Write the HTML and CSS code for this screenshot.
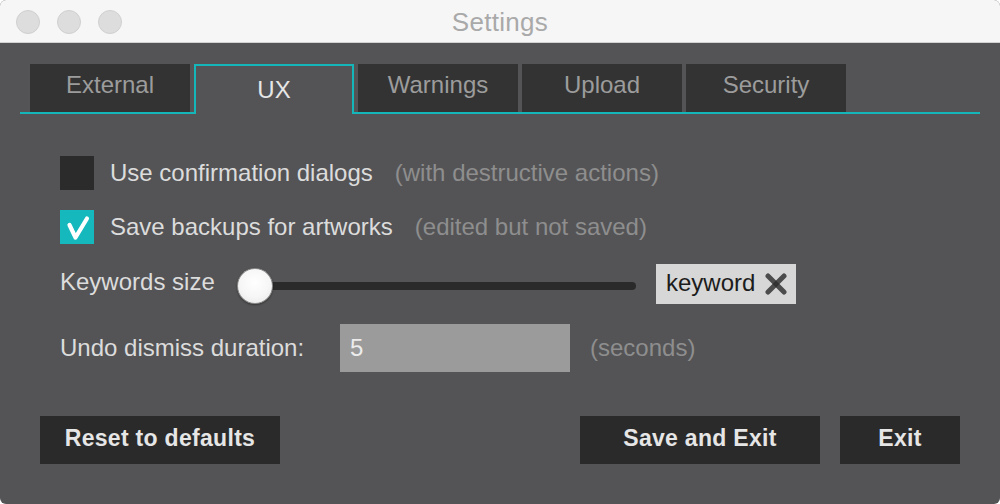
FILE: index.html
```html
<!DOCTYPE html>
<html lang="en">
<head>
<meta charset="utf-8">
<title>Settings</title>
<link rel="stylesheet" href="styles.css">
</head>
<body>
<div class="window">
  <header class="titlebar">
    <div class="lights">
      <span class="light"></span>
      <span class="light"></span>
      <span class="light"></span>
    </div>
    <div class="title">Settings</div>
    <div class="spacer"></div>
  </header>
  <main class="panel">
    <nav class="tabs">
      <div class="tab">External</div>
      <div class="tab tab-active">UX</div>
      <div class="tab">Warnings</div>
      <div class="tab">Upload</div>
      <div class="tab">Security</div>
    </nav>
    <section class="content">
      <div class="row row-check">
        <span class="checkbox"></span>
        <span class="label">Use confirmation dialogs</span>
        <span class="hint">(with destructive actions)</span>
      </div>
      <div class="row row-check">
        <span class="checkbox checked">
          <svg width="34" height="34" viewBox="0 0 34 34"><polyline points="9.5,15 15.5,27.5 27,8.5" fill="none" stroke="#ffffff" stroke-width="4.2" stroke-linecap="round" stroke-linejoin="round"/></svg>
        </span>
        <span class="label">Save backups for artworks</span>
        <span class="hint">(edited but not saved)</span>
      </div>
      <div class="row row-slider">
        <span class="label label-kw">Keywords size</span>
        <div class="slider">
          <div class="track"></div>
          <div class="handle"></div>
        </div>
        <div class="chip">
          <span class="chip-text">keyword</span>
          <svg class="chip-x" width="22" height="22" viewBox="0 0 22 22"><line x1="3" y1="3" x2="19" y2="19" stroke="rgba(45,45,45,0.82)" stroke-width="5" stroke-linecap="round"/><line x1="19" y1="3" x2="3" y2="19" stroke="rgba(45,45,45,0.82)" stroke-width="5" stroke-linecap="round"/></svg>
        </div>
      </div>
      <div class="row row-input">
        <span class="label label-undo">Undo dismiss duration:</span>
        <div class="input">5</div>
        <span class="hint hint-sec">(seconds)</span>
      </div>
    </section>
    <footer class="actions">
      <button class="btn btn-wide">Reset to defaults</button>
      <div class="actions-right">
        <button class="btn btn-wide">Save and Exit</button>
        <button class="btn btn-narrow">Exit</button>
      </div>
    </footer>
  </main>
</div>
</body>
</html>
```

FILE: styles.css
```css
* { box-sizing: border-box; }

html, body {
  margin: 0;
  padding: 0;
  background: #ffffff;
}

body {
  font-family: "Liberation Sans", Arial, sans-serif;
  width: 1000px;
  height: 504px;
  overflow: hidden;
}

.window {
  width: 1000px;
  height: 504px;
  border-radius: 6px;
  overflow: hidden;
  background: #545456;
  display: flex;
  flex-direction: column;
}

.titlebar {
  height: 43px;
  flex: 0 0 43px;
  background: #f6f6f6;
  border-bottom: 1px solid #d2d2d2;
  display: grid;
  grid-template-columns: 1fr auto 1fr;
  align-items: center;
}

.lights {
  display: flex;
  gap: 17px;
  padding-left: 16px;
  padding-top: 1px;
}

.light {
  width: 24px;
  height: 24px;
  border-radius: 50%;
  background: #dddddd;
  border: 1px solid #d0d0d0;
}

.title {
  font-size: 26px;
  color: #a9a9a9;
  letter-spacing: 0.3px;
  padding-top: 3px;
}

.panel {
  flex: 1;
  display: flex;
  flex-direction: column;
  padding: 21px 20px 40px;
}

.tabs {
  display: flex;
  gap: 4px;
  padding-left: 10px;
  height: 50px;
  border-bottom: 2px solid #15b6ba;
}

.tab {
  width: 160px;
  height: 48px;
  background: #333333;
  color: #9c9c9c;
  font-size: 24px;
  display: flex;
  align-items: center;
  justify-content: center;
  padding-bottom: 6px;
}

.tab-active {
  height: 50px;
  margin-bottom: -2px;
  background: #545456;
  border: 2px solid #15b6ba;
  border-bottom: none;
  color: #e6e6e6;
  padding-bottom: 0;
  padding-top: 0;
}

.content {
  display: flex;
  flex-direction: column;
  gap: 20px;
  padding: 42px 20px 0 40px;
}

.row {
  display: flex;
  align-items: center;
}

.row-check { height: 34px; }
.row-slider { height: 40px; }
.row-input { height: 48px; }

.label {
  font-size: 24px;
  color: #dcdcdc;
}

.hint {
  font-size: 24px;
  color: #8e8e8e;
  margin-left: 22px;
}

.checkbox {
  width: 34px;
  height: 34px;
  background: #2b2b2b;
  margin-right: 16px;
  display: block;
}

.checkbox.checked {
  background: #15b9bd;
}

.checkbox svg { display: block; }

.label-kw {
  width: 177px;
  flex: 0 0 177px;
  padding-bottom: 4px;
}

.slider {
  position: relative;
  width: 399px;
  height: 38px;
  display: flex;
  align-items: center;
  margin-top: 4px;
}

.track {
  margin-left: 18px;
  flex: 1;
  height: 8px;
  border-radius: 4px;
  background: #2a2a2a;
}

.handle {
  position: absolute;
  left: 0;
  top: 1px;
  width: 36px;
  height: 36px;
  border-radius: 50%;
  background: radial-gradient(circle at 50% 40%, #ffffff 0%, #f6f6f6 55%, #e4e4e4 100%);
  border: 1px solid #8a8a8a;
  box-shadow: 0 1px 2px rgba(0,0,0,0.35);
}

.chip {
  margin-left: 20px;
  height: 40px;
  background: #d7d7d7;
  display: flex;
  align-items: center;
  padding: 0 9px 0 10px;
  gap: 10px;
}

.chip-text {
  font-size: 24px;
  color: #1c1c1c;
  padding-bottom: 2px;
}

.chip-x { display: block; }

.label-undo {
  width: 280px;
  flex: 0 0 280px;
}

.input {
  width: 230px;
  height: 48px;
  background: #9b9b9b;
  color: #ececec;
  font-size: 24px;
  padding-left: 10px;
  display: flex;
  align-items: center;
}

.hint-sec {
  margin-left: 20px;
}

.actions {
  margin-top: auto;
  display: flex;
  justify-content: space-between;
  padding: 0 20px;
}

.actions-right {
  display: flex;
  gap: 20px;
}

.btn {
  height: 48px;
  border: none;
  background: #2a2a2a;
  color: #e6e6e6;
  font-family: "Liberation Sans", Arial, sans-serif;
  font-weight: bold;
  font-size: 23px;
  letter-spacing: 0.3px;
  padding: 0 0 4px;
  margin: 0;
}

.btn-wide { width: 240px; }
.btn-narrow { width: 120px; }
```
